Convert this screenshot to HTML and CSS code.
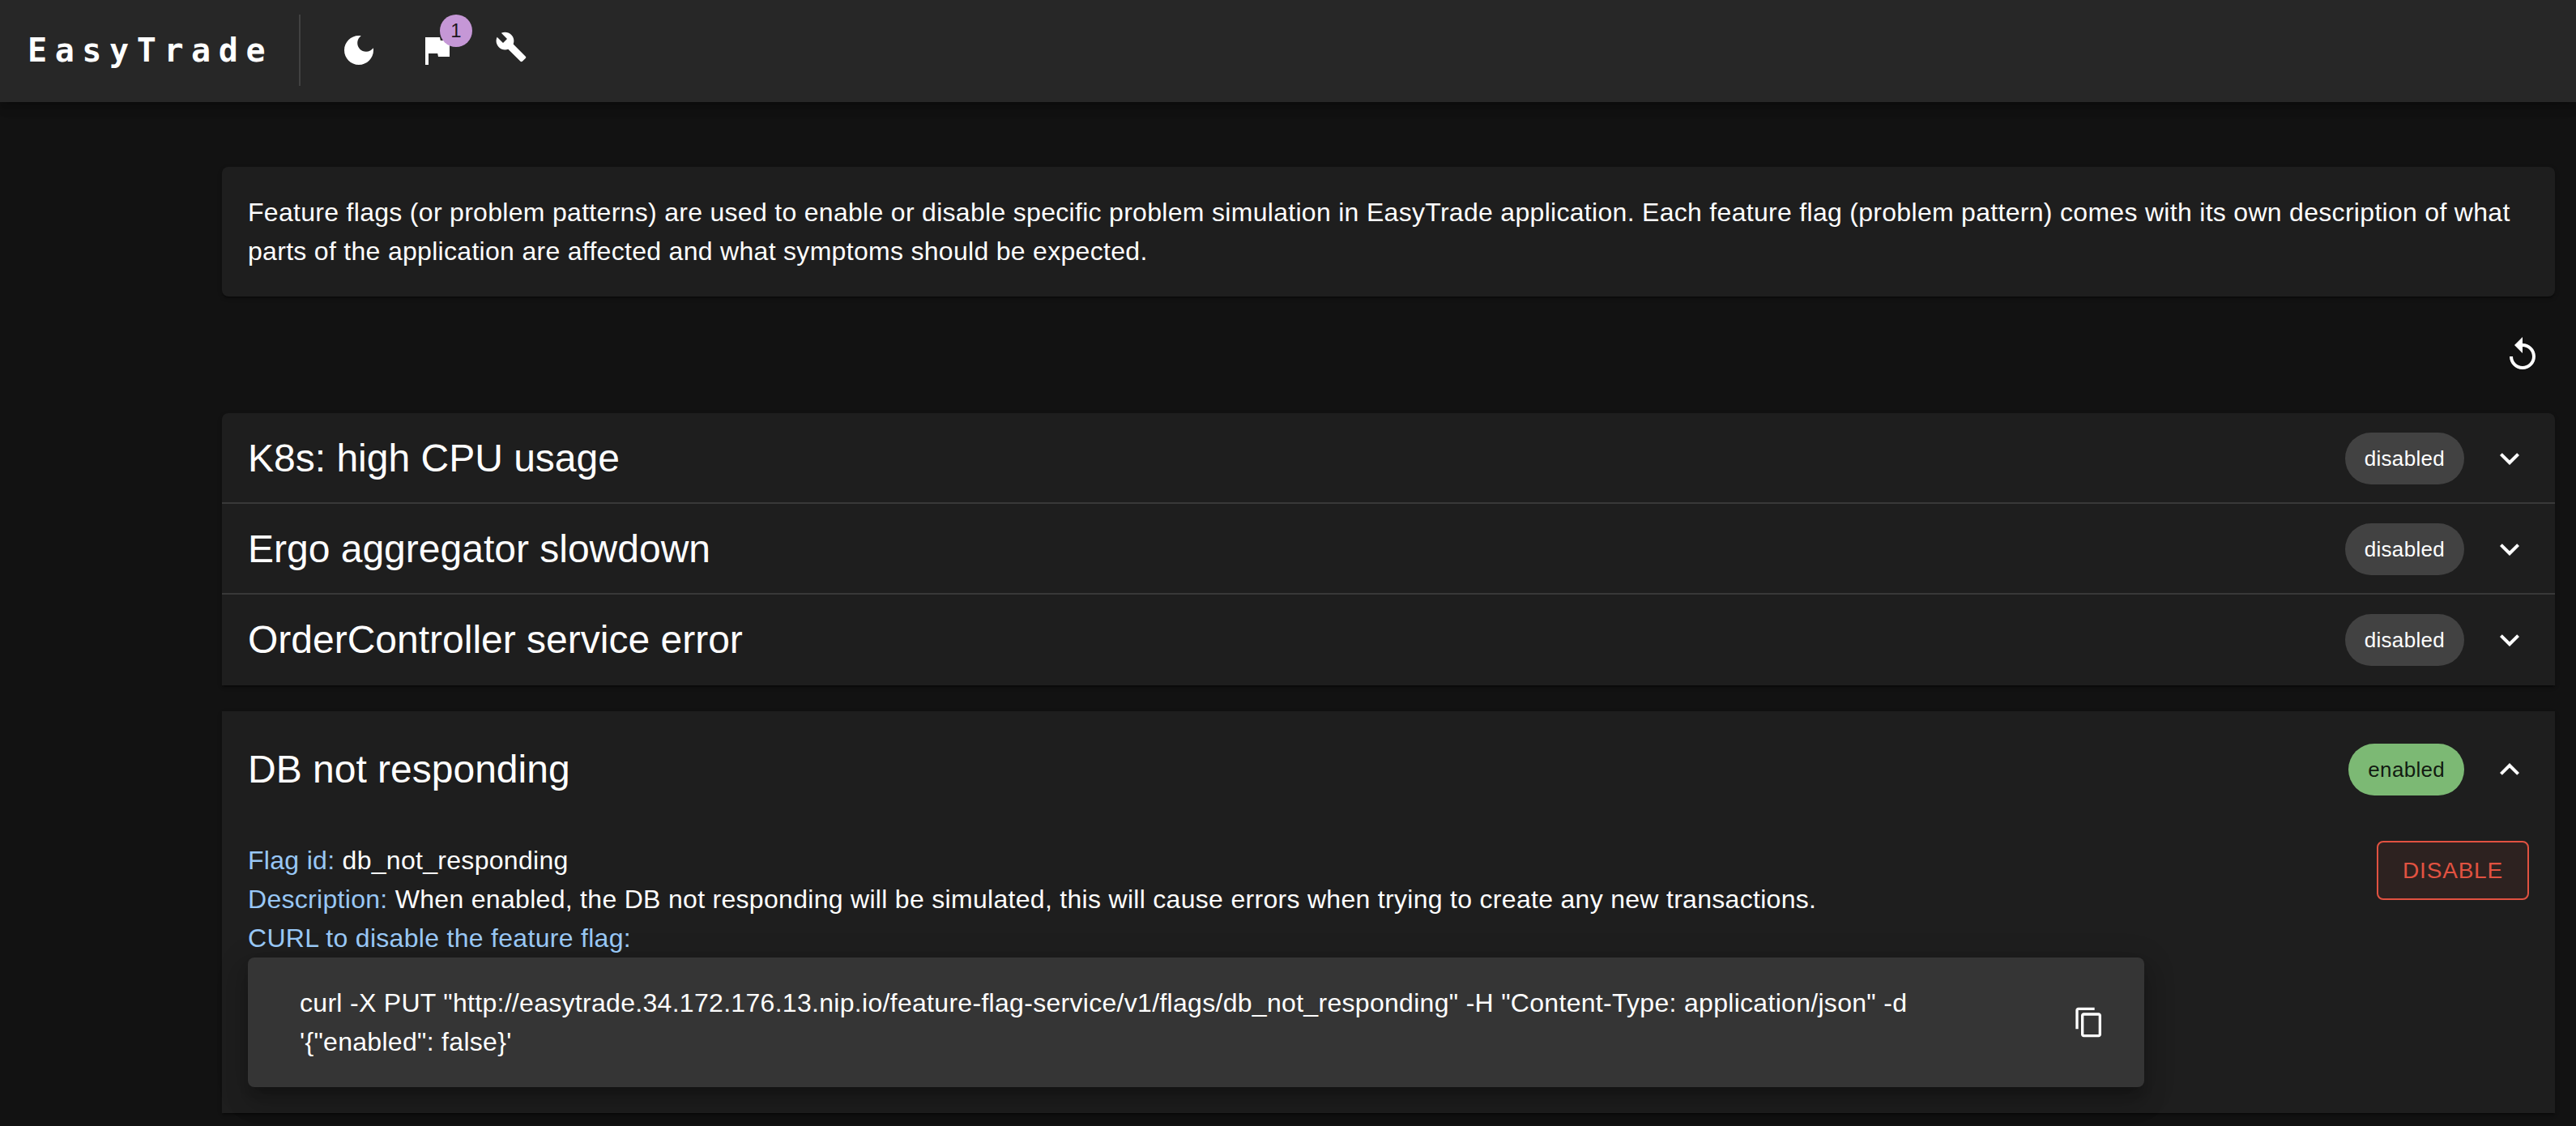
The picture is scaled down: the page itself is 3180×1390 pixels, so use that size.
FILE: index.html
```html
<!DOCTYPE html>
<html lang="en">
<head>
<meta charset="utf-8">
<meta name="viewport" content="width=device-width, initial-scale=1">
<title>EasyTrade</title>
<link rel="stylesheet" href="styles.css">
</head>
<body>
<header class="app-bar">
  <a class="brand" href="#">EasyTrade</a>
  <span class="bar-divider"></span>
  <nav class="bar-actions" aria-label="Tools">
    <button class="icon-button" type="button" aria-label="Toggle dark mode">
      <svg class="icon" viewBox="0 0 24 24" aria-hidden="true"><path d="M12 3c-4.97 0-9 4.03-9 9s4.03 9 9 9 9-4.03 9-9c0-.46-.04-.92-.1-1.36-.98 1.37-2.58 2.26-4.4 2.26-2.98 0-5.4-2.42-5.4-5.4 0-1.81.89-3.42 2.26-4.4-.44-.06-.9-.1-1.36-.1z"/></svg>
    </button>
    <button class="icon-button" type="button" aria-label="Feature flags">
      <svg class="icon" viewBox="0 0 24 24" aria-hidden="true"><path d="M14.4 6 14 4H5v17h2v-7h5.6l.4 2h7V6z"/></svg>
      <span class="badge">1</span>
    </button>
    <button class="icon-button" type="button" aria-label="Settings">
      <svg class="icon icon-small" viewBox="0 0 24 24" aria-hidden="true"><path d="m22.7 19-9.1-9.1c.9-2.3.4-5-1.5-6.9-2-2-5-2.4-7.4-1.3L9 6 6 9 1.6 4.7C.4 7.1.9 10.1 2.9 12.1c1.9 1.9 4.6 2.4 6.9 1.5l9.1 9.1c.4.4 1 .4 1.4 0l2.3-2.3c.5-.4.5-1.1.1-1.4z"/></svg>
    </button>
  </nav>
</header>

<main class="content">
  <p class="card intro">Feature flags (or problem patterns) are used to enable or disable specific problem simulation in EasyTrade application. Each feature flag (problem pattern) comes with its own description of what parts of the application are affected and what symptoms should be expected.</p>

  <div class="toolbar">
    <button class="icon-button" type="button" aria-label="Reload">
      <svg class="icon" viewBox="0 0 24 24" aria-hidden="true"><path d="M12 5V1L7 6l5 5V7c3.31 0 6 2.69 6 6s-2.69 6-6 6-6-2.69-6-6H4c0 4.42 3.58 8 8 8s8-3.58 8-8-3.58-8-8-8z"/></svg>
    </button>
  </div>

  <section class="card flag-list">
    <button class="flag-row" type="button" aria-expanded="false">
      <span class="flag-name">K8s: high CPU usage</span>
      <span class="chip">disabled</span>
      <svg class="icon" viewBox="0 0 24 24" aria-hidden="true"><path d="M16.59 8.59 12 13.17 7.41 8.59 6 10l6 6 6-6z"/></svg>
    </button>
    <button class="flag-row" type="button" aria-expanded="false">
      <span class="flag-name">Ergo aggregator slowdown</span>
      <span class="chip">disabled</span>
      <svg class="icon" viewBox="0 0 24 24" aria-hidden="true"><path d="M16.59 8.59 12 13.17 7.41 8.59 6 10l6 6 6-6z"/></svg>
    </button>
    <button class="flag-row" type="button" aria-expanded="false">
      <span class="flag-name">OrderController service error</span>
      <span class="chip">disabled</span>
      <svg class="icon" viewBox="0 0 24 24" aria-hidden="true"><path d="M16.59 8.59 12 13.17 7.41 8.59 6 10l6 6 6-6z"/></svg>
    </button>
  </section>

  <section class="card flag-open">
    <button class="flag-row flag-row-open" type="button" aria-expanded="true">
      <span class="flag-name">DB not responding</span>
      <span class="chip chip-on">enabled</span>
      <svg class="icon" viewBox="0 0 24 24" aria-hidden="true"><path d="m12 8-6 6 1.41 1.41L12 10.83l4.59 4.58L18 14z"/></svg>
    </button>
    <div class="details">
      <div class="details-text">
        <p><span class="label">Flag id:</span> db_not_responding</p>
        <p><span class="label">Description:</span> When enabled, the DB not responding will be simulated, this will cause errors when trying to create any new transactions.</p>
        <p class="label">CURL to disable the feature flag:</p>
        <div class="snippet">
          <code class="snippet-text">curl -X PUT "http://easytrade.34.172.176.13.nip.io/feature-flag-service/v1/flags/db_not_responding" -H "Content-Type: application/json" -d '{"enabled": false}'</code>
          <button class="icon-button" type="button" aria-label="Copy">
            <svg class="icon icon-small" viewBox="0 0 24 24" aria-hidden="true"><path d="M16 1H4c-1.1 0-2 .9-2 2v14h2V3h12V1zm3 4H8c-1.1 0-2 .9-2 2v14c0 1.1.9 2 2 2h11c1.1 0 2-.9 2-2V7c0-1.1-.9-2-2-2zm0 16H8V7h11v14z"/></svg>
          </button>
        </div>
      </div>
      <button class="disable-button" type="button">DISABLE</button>
    </div>
  </section>
</main>
</body>
</html>
```
FILE: styles.css
```css
* {
  box-sizing: border-box;
}

body {
  margin: 0;
  background: #121212;
  color: #fff;
  font-family: "Liberation Sans", Arial, sans-serif;
  font-size: 32px;
  line-height: 48px;
  letter-spacing: 0.00938em;
}

p {
  margin: 0;
}

button {
  margin: 0;
  border: 0;
  background: none;
  color: inherit;
  font: inherit;
  letter-spacing: inherit;
  cursor: pointer;
}

.icon {
  display: block;
  flex: none;
  width: 48px;
  height: 48px;
  fill: currentColor;
}

.icon-small {
  width: 40px;
  height: 40px;
}

.icon-button {
  position: relative;
  flex: none;
  padding: 16px;
  border-radius: 50%;
}

/* App bar */
.app-bar {
  display: flex;
  align-items: center;
  height: 126px;
  padding: 0 34px 2px;
  background: #272727;
  box-shadow: 0 4px 8px -2px rgba(0, 0, 0, 0.2), 0 8px 10px rgba(0, 0, 0, 0.14), 0 2px 20px rgba(0, 0, 0, 0.12);
}

.brand {
  margin-right: 32px;
  color: inherit;
  font-family: "DejaVu Sans Mono", monospace;
  font-size: 40px;
  font-weight: 700;
  letter-spacing: 0.24em;
  text-decoration: none;
}

.bar-divider {
  width: 2px;
  height: 88px;
  background: #414141;
}

.bar-actions {
  display: flex;
  align-items: flex-start;
  gap: 16px;
  margin-left: 32px;
}

.badge {
  position: absolute;
  top: -4px;
  right: -4px;
  width: 40px;
  height: 40px;
  border-radius: 20px;
  background: #c597d6;
  color: rgba(0, 0, 0, 0.87);
  font-size: 24px;
  line-height: 40px;
  text-align: center;
}

/* Page content */
.content {
  padding: 80px 26px 16px 274px;
}

.card {
  border-radius: 8px;
  background: #1e1e1e;
  box-shadow: 0 4px 2px -2px rgba(0, 0, 0, 0.2), 0 2px 2px rgba(0, 0, 0, 0.14), 0 2px 6px rgba(0, 0, 0, 0.12);
}

.intro {
  padding: 32px;
}

.toolbar {
  display: flex;
  justify-content: flex-end;
  padding: 32px 0;
}

/* Flag accordions */
.flag-list {
  border-radius: 8px 8px 0 0;
}

.flag-row {
  display: flex;
  align-items: center;
  gap: 32px;
  width: 100%;
  height: 112px;
  padding: 0 32px;
  text-align: left;
}

.flag-list .flag-row:not(:last-child) {
  box-shadow: inset 0 -2px #383838;
}

.flag-row-open {
  height: 144px;
}

.flag-name {
  flex: 1;
  font-size: 48px;
  line-height: 64px;
  letter-spacing: 0;
}

.chip {
  height: 64px;
  padding: 0 24px;
  border-radius: 32px;
  background: #424242;
  font-size: 26px;
  line-height: 64px;
}

.chip-on {
  background: #7cb974;
  color: rgba(0, 0, 0, 0.87);
}

.flag-open {
  margin-top: 32px;
  border-radius: 0;
}

.details {
  display: grid;
  grid-template-columns: repeat(12, 1fr);
  gap: 32px;
  align-items: start;
  padding: 16px 32px 32px;
}

.details-text {
  grid-column: span 10;
}

.label {
  color: #98c7f5;
}

.snippet {
  display: flex;
  align-items: center;
  gap: 64px;
  padding: 32px 32px 32px 64px;
  border-radius: 8px;
  background: #353535;
  box-shadow: 0 10px 12px -6px rgba(0, 0, 0, 0.2), 0 20px 28px 2px rgba(0, 0, 0, 0.14), 0 8px 36px 6px rgba(0, 0, 0, 0.12);
}

.snippet-text {
  flex: 1;
  font-family: inherit;
}

.disable-button {
  grid-column: span 2;
  justify-self: end;
  padding: 10px 30px;
  border: 2px solid #e15241;
  border-radius: 8px;
  background: #2d2220;
  color: #e15241;
  font-size: 28px;
  line-height: 49px;
  letter-spacing: 0.02857em;
}
```
